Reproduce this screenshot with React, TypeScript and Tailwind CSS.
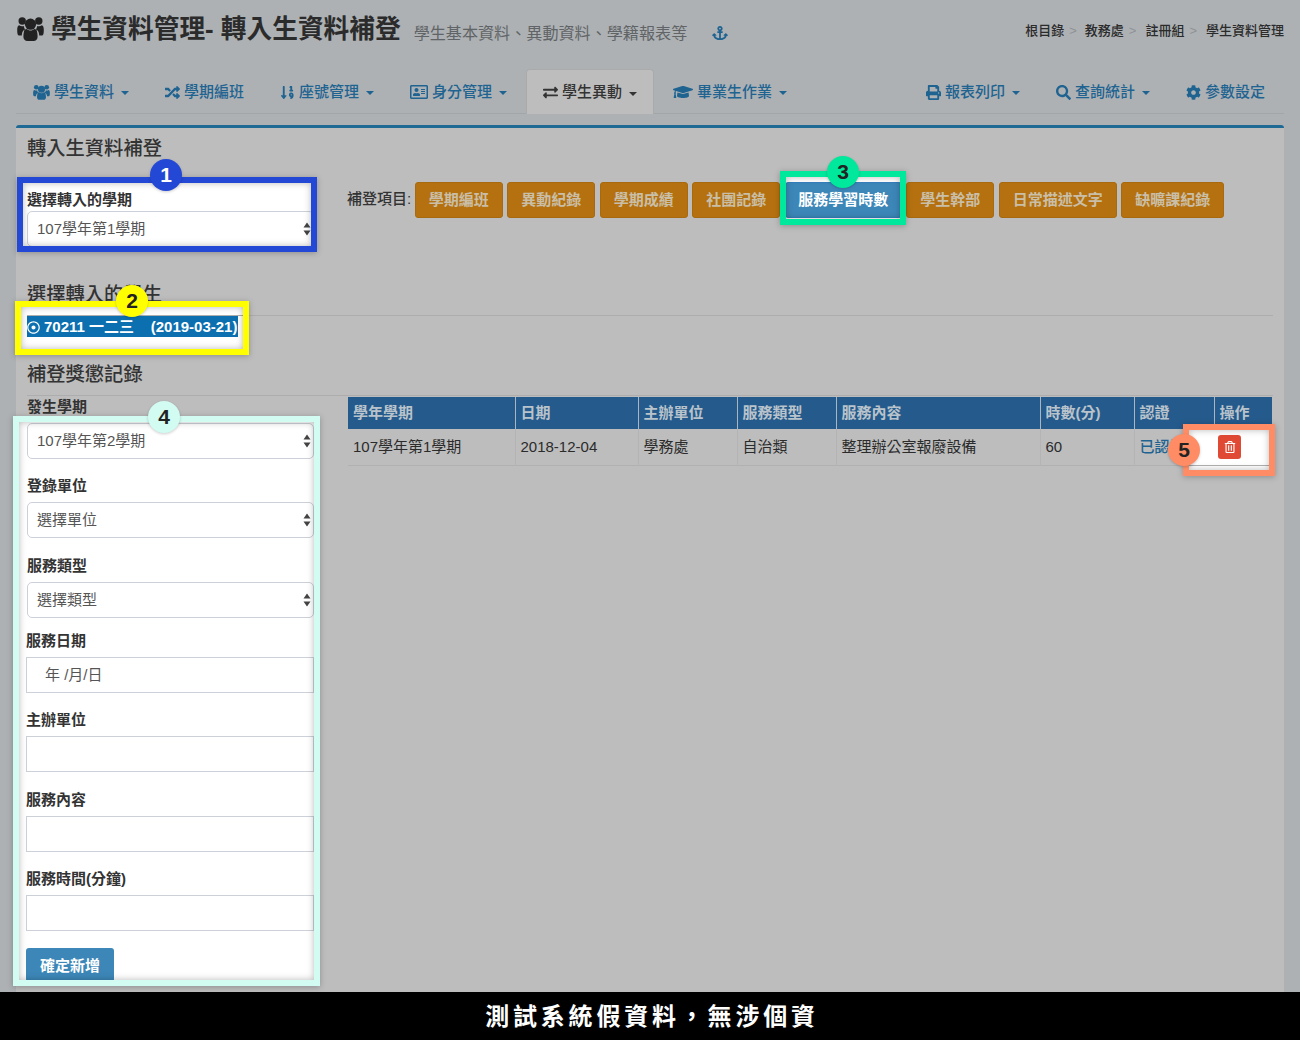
import { FaAnchor, FaCog, FaExchangeAlt, FaGraduationCap, FaPrint, FaRandom, FaRegAddressCard, FaRegDotCircle, FaRegTrashAlt, FaSearch, FaSortNumericDown } from "react-icons/fa";
import type { ReactNode } from "react";

// FA4 style "users" glyph, taller than the one in react-icons
const UsersIcon = ({ className }: { className?: string }) => (
  <svg className={className} viewBox="0 0 27 25" fill="currentColor">
    <circle cx="13.5" cy="8.2" r="5.6" />
    <circle cx="5.2" cy="5" r="3.7" />
    <circle cx="21.8" cy="5" r="3.7" />
    <path d="M7 15.5c0-1.6 1.2-2.6 2.6-2.6 1 .9 2.4 1.5 3.9 1.5s2.9-.6 3.9-1.5c1.4 0 2.6 1 2.6 2.6 .5 2 .6 3.8 .6 5.3 0 2.6-1.6 4.2-4 4.2h-6.2c-2.4 0-4-1.6-4-4.2 0-1.5.1-3.3.6-5.3z" />
    <path d="M.2 14.2c0-2.6.5-4.7 2-4.9 .8.6 1.9 1 3 1 .6 0 1.2-.1 1.700-.3 0 1.300.5 2.500 1.300 3.500-1.700.6-3 2.100-3.200 4.300-.1.6-.2 1.100-.2 1.600H2c-1.300 0-1.800-1.500-1.800-5.200z" />
    <path d="M26.800 14.200c0-2.600-.5-4.700-2-4.900-.8.6-1.900 1-3 1-.6 0-1.200-.1-1.700-.3 0 1.300-.5 2.500-1.300 3.500 1.700.6 3 2.100 3.200 4.300.1.6.2 1.100.2 1.600H25c1.300 0 1.800-1.500 1.800-5.200z" />
  </svg>
);

const Caret = () => (
  <span className="ml-[3px] mt-[2px] inline-block h-0 w-0 border-x-[4px] border-t-[4px] border-x-transparent border-t-current"></span>
);

const NavItem = ({ icon, label, caret, active }: { icon: ReactNode; label: string; caret?: boolean; active?: boolean }) => (
  <a
    href="#"
    className={
      active
        ? "-mb-px flex h-[45px] items-center gap-[4px] rounded-t border border-b-0 border-[#a9abab] bg-[#bdbdbd] px-[16px] pt-px text-[#333]"
        : "flex h-[44px] items-center gap-[4px] px-[17px] pt-[2px] text-[#1f6391]"
    }
  >
    <span className="flex items-center text-[15px]">{icon}</span>
    <span>{label}</span>
    {caret && <Caret />}
  </a>
);

const Arrows = () => (
  <svg className="absolute right-[3px] top-1/2 -translate-y-1/2" width="8" height="14" viewBox="0 0 8 14">
    <path d="M4 0.5 L7.5 5.5 H0.5 Z M4 13.5 L7.5 8.5 H0.5 Z" fill="#444" />
  </svg>
);

const SelectBox = ({ value }: { value: string }) => (
  <div className="relative h-[36px]">
    <select
      defaultValue={value}
      className="h-[36px] w-full appearance-none rounded-[5px] border border-[#ccd0d8] bg-white pl-[9px] text-[15px] text-[#555]"
    >
      <option>{value}</option>
    </select>
    <Arrows />
  </div>
);

const Field = ({ label, children, className }: { label: string; children: ReactNode; className: string }) => (
  <div className={className}>
    <label className="mb-[6px] block h-[20px] text-[15px] font-bold leading-[20px] text-[#333]">{label}</label>
    {children}
  </div>
);

const TextBox = ({ value }: { value?: string }) => (
  <input
    readOnly
    defaultValue={value}
    className="block h-[36px] w-full border border-[#ccd0d8] bg-white pb-[3px] pl-[18px] text-[15px] text-[#555]"
  />
);

const Frame = ({ className }: { className: string }) => (
  <div className={"pointer-events-none absolute z-0 bg-white " + className}></div>
);

const FrameBorder = ({ className }: { className: string }) => (
  <div
    className={
      "pointer-events-none absolute z-20 border-[6px] shadow-[0_1px_6px_rgba(0,0,0,0.25),inset_0_0_7px_rgba(0,0,0,0.28)] " + className
    }
  ></div>
);

const Badge = ({ n, className }: { n: number; className: string }) => (
  <div
    className={
      "absolute z-30 flex h-[32px] w-[32px] items-center justify-center rounded-full text-[21px] font-bold shadow-[0_1px_3px_rgba(0,0,0,0.2)] " +
      className
    }
  >
    {n}
  </div>
);

const tabs: [string, string][] = [
  ["學期編班", "w-[88px]"],
  ["異動紀錄", "w-[88px]"],
  ["學期成績", "w-[88px]"],
  ["社團記錄", "w-[88px]"],
];
const tabsAfter: [string, string][] = [
  ["學生幹部", "w-[88px]"],
  ["日常描述文字", "w-[118px]"],
  ["缺曠課紀錄", "w-[103px]"],
];

const OrangeBtn = ({ label, w }: { label: string; w: string }) => (
  <button className={"h-[36px] rounded-[3px] border border-[#a86a0d] bg-[#b5710f] text-[15px] font-bold text-[#c9bfa8] " + w}>
    {label}
  </button>
);

const heads = ["學年學期", "日期", "主辦單位", "服務類型", "服務內容", "時數(分)", "認證", "操作"];
const widths = ["w-[167px]", "w-[123px]", "w-[99px]", "w-[99px]", "w-[204px]", "w-[94px]", "w-[80px]", "w-[58px]"];

const App = () => {
  return (
    <div
      className="flex h-[1040px] w-[1300px] flex-col overflow-hidden bg-[#adb1b4] text-[15px] text-[#333]"
      style={{ fontFamily: '"Liberation Sans", "Noto Sans CJK TC", sans-serif' }}
    >
      <div className="flex flex-1 flex-col overflow-hidden px-[16px]">
        {/* header */}
        <div className="flex h-[69px] shrink-0 items-start pt-[11px]">
          <UsersIcon className="ml-px mr-[7px] mt-[5px] h-[25px] w-[27px] text-[#222]" />
          <h1 className="text-[25.7px] font-bold leading-[36px] text-[#2b2b2b]">學生資料管理- 轉入生資料補登</h1>
          <span className="ml-[13px] mt-[10px] text-[16.1px] leading-[24px] text-[#616466]">學生基本資料、異動資料、學籍報表等</span>
          <FaAnchor className="ml-[25px] mt-[14px] text-[16px] text-[#1f6391]" />
          <div className="ml-auto mt-[9px] flex items-center text-[13px] font-medium leading-[22px] text-[#2b2b2b]">
            <span>根目錄</span>
            <span className="mx-[5px] text-[#8f9294]">&gt;</span>
            <span className="ml-[3px]">教務處</span>
            <span className="mx-[5px] text-[#8f9294]">&gt;</span>
            <span className="ml-[4px]">註冊組</span>
            <span className="mx-[5px] text-[#8f9294]">&gt;</span>
            <span className="ml-[4px]">學生資料管理</span>
          </div>
        </div>

        {/* nav */}
        <nav className="flex h-[45px] shrink-0 items-start gap-[2px] border-b border-[#a3a6a8] text-[15px] font-medium">
          <NavItem icon={<UsersIcon className="h-[16px] w-[17px]" />} label="學生資料" caret />
          <NavItem icon={<FaRandom />} label="學期編班" />
          <NavItem icon={<FaSortNumericDown />} label="座號管理" caret />
          <NavItem icon={<FaRegAddressCard className="text-[18px]" />} label="身分管理" caret />
          <NavItem icon={<FaExchangeAlt />} label="學生異動" caret active />
          <NavItem icon={<FaGraduationCap className="text-[20px]" />} label="畢業生作業" caret />
          <div className="ml-auto mr-[2px] flex gap-[2px]">
            <NavItem icon={<FaPrint />} label="報表列印" caret />
            <NavItem icon={<FaSearch />} label="查詢統計" caret />
            <NavItem icon={<FaCog />} label="參數設定" />
          </div>
        </nav>

        {/* panel */}
        <div className="relative mt-[11px] flex-1 rounded-t-[3px] border-t-[3px] border-[#1f6a94] bg-[#bdbdbd] px-[11px]">
          <Frame className="left-[1px] top-[49px] h-[75px] w-[300px]" />
          <Frame className="left-[-1px] top-[173px] h-[54px] w-[234px]" />
          <Frame className="left-[764px] top-[43px] h-[54px] w-[126px]" />
          <Frame className="left-[-3px] top-[288px] h-[570px] w-[307px]" />
          <Frame className="left-[1167px] top-[296px] h-[52px] w-[92px]" />

          <div className="relative z-10">
            <h2 className="h-[40px] text-[19.3px] font-medium leading-[42px] text-[#333]">轉入生資料補登</h2>

            <div className="flex h-[78px] items-start">
              <div className="w-[287px] shrink-0 pt-[22px]">
                <label className="mb-px block h-[20px] text-[15px] font-bold leading-[20px] text-[#333]">選擇轉入的學期</label>
                <SelectBox value="107學年第1學期" />
              </div>
              <div className="ml-[33px] mt-[14px] flex items-center gap-[4.5px]">
                <span className="mr-[-1px] -mt-[2px] text-[15px] font-medium text-[#333]">補登項目:</span>
                {tabs.map(([label, w]) => (
                  <OrangeBtn key={label} label={label} w={w} />
                ))}
                <button className="h-[36px] w-[117px] rounded-[3px] border border-[#357ebd] bg-[#3c87b8] text-[15px] font-bold text-white">
                  服務學習時數
                </button>
                {tabsAfter.map(([label, w]) => (
                  <OrangeBtn key={label} label={label} w={w} />
                ))}
              </div>
            </div>

            <h2 className="mt-[36px] h-[34px] border-b border-[#adadad] text-[19.3px] font-medium leading-[26px] text-[#333]">
              選擇轉入的學生
            </h2>
            <div className="flex h-[21px] w-[211px] items-center whitespace-pre bg-[#0c70b0] pt-px text-[15px] font-bold text-white">
              <FaRegDotCircle className="mr-[4px] text-[13px]" />
              70211 一二三{"    "}(2019-03-21)
            </div>

            <h2 className="mt-[25px] h-[34px] border-b border-[#adadad] text-[19.3px] font-medium leading-[26px] text-[#333]">
              補登獎懲記錄
            </h2>

            <div className="mt-px flex items-start">
              <div className="w-[287px] shrink-0">
                <Field label="發生學期" className="mb-[17px]">
                  <SelectBox value="107學年第2學期" />
                </Field>
                <Field label="登錄單位" className="mb-[18px]">
                  <SelectBox value="選擇單位" />
                </Field>
                <Field label="服務類型" className="mb-[13px]">
                  <SelectBox value="選擇類型" />
                </Field>
                <Field label="服務日期" className="-ml-px mb-[17px]">
                  <TextBox value="年 /月/日" />
                </Field>
                <Field label="主辦單位" className="-ml-px mb-[18px]">
                  <TextBox />
                </Field>
                <Field label="服務內容" className="-ml-px mb-[17px]">
                  <TextBox />
                </Field>
                <Field label="服務時間(分鐘)" className="-ml-px mb-[17px]">
                  <TextBox />
                </Field>
                <button className="-ml-px h-[34px] w-[88px] rounded-[3px] bg-[#3c87b8] pt-[2px] text-[15px] font-bold text-white">
                  確定新增
                </button>
              </div>

              <table className="ml-[34px] w-[924px] table-fixed border-collapse text-left text-[15px]">
                <thead>
                  <tr className="h-[32px] bg-[#255a8c] text-[#b9c3cb]">
                    {heads.map((h, i) => (
                      <th key={h} className={"border-x border-[#a9b5bf] px-[5px] pt-px font-bold first:border-l-0 last:border-r-0 " + widths[i]}>
                        {h}
                      </th>
                    ))}
                  </tr>
                </thead>
                <tbody>
                  <tr className="h-[36px] border-b border-[#b1b1b1] text-[#2b2b2b]">
                    <td className="border-x border-[#b4b4b4] px-[5px] first:border-l-0">107學年第1學期</td>
                    <td className="border-x border-[#b4b4b4] px-[5px]">2018-12-04</td>
                    <td className="border-x border-[#b4b4b4] px-[5px]">學務處</td>
                    <td className="border-x border-[#b4b4b4] px-[5px]">自治類</td>
                    <td className="border-x border-[#b4b4b4] px-[5px]">整理辦公室報廢設備</td>
                    <td className="border-x border-[#b4b4b4] px-[5px]">60</td>
                    <td className="border-l border-[#b4b4b4] px-[5px] font-medium text-[#1f6391]">已認證</td>
                    <td className="pl-[4px]">
                      <button className="flex h-[24px] w-[23px] items-center justify-center rounded-[3px] bg-[#e04a35] text-[12px] text-white">
                        <FaRegTrashAlt />
                      </button>
                    </td>
                  </tr>
                </tbody>
              </table>
            </div>
          </div>

          <FrameBorder className="left-[1px] top-[49px] h-[75px] w-[300px] border-[#2348d6]" />
          <FrameBorder className="left-[-1px] top-[173px] h-[54px] w-[234px] border-[#ffff00]" />
          <FrameBorder className="left-[764px] top-[43px] h-[54px] w-[126px] border-[#00e89b]" />
          <FrameBorder className="left-[-3px] top-[288px] h-[570px] w-[307px] border-[#d2fbf2]" />
          <FrameBorder className="left-[1167px] top-[296px] h-[52px] w-[92px] border-[#ff8c64]" />

          <Badge n={1} className="left-[134px] top-[31px] bg-[#2348d6] text-white" />
          <Badge n={2} className="left-[100px] top-[157px] bg-[#ffff00] text-[#222]" />
          <Badge n={3} className="left-[811px] top-[28px] bg-[#00e89b] text-[#222]" />
          <Badge n={4} className="left-[132px] top-[273px] bg-[#d2fbf2] text-[#222]" />
          <Badge n={5} className="left-[1152px] top-[306px] bg-[#ff8c64] text-[#222]" />
        </div>
      </div>

      <div className="flex h-[48px] shrink-0 items-center justify-center bg-black pl-[4px] pt-[2px] text-[24px] font-bold tracking-[3.8px] text-white">
        測試系統假資料，無涉個資
      </div>
    </div>
  );
};

export default App;
